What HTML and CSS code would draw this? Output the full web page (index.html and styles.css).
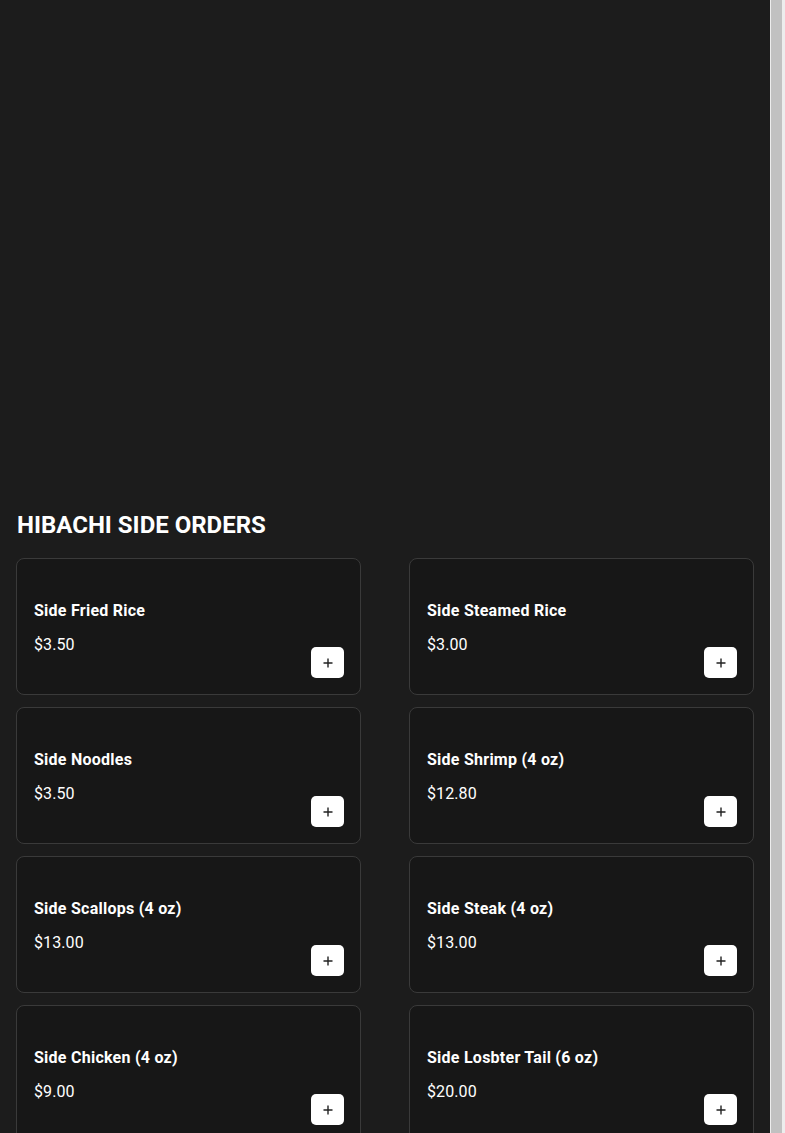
FILE: index.html
```html
<!DOCTYPE html>
<html lang="en">
<head>
<meta charset="utf-8">
<title>Hibachi Side Orders</title>
<link rel="stylesheet" href="styles.css">
</head>
<body>
<div class="frame">
<main class="page">
  <div class="hero"></div>
  <section class="section">
    <h2 class="section-title">HIBACHI SIDE ORDERS</h2>
    <div class="grid">
      <div class="card"><div class="info"><div class="name">Side Fried Rice</div><div class="price">$3.50</div></div><button class="add"><svg viewBox="0 0 12 12" width="12" height="12"><path d="M6 1.5v9M1.5 6h9" stroke="#222" stroke-width="1.4" fill="none"/></svg></button></div>
      <div class="card"><div class="info"><div class="name">Side Steamed Rice</div><div class="price">$3.00</div></div><button class="add"><svg viewBox="0 0 12 12" width="12" height="12"><path d="M6 1.5v9M1.5 6h9" stroke="#222" stroke-width="1.4" fill="none"/></svg></button></div>
      <div class="card"><div class="info"><div class="name">Side Noodles</div><div class="price">$3.50</div></div><button class="add"><svg viewBox="0 0 12 12" width="12" height="12"><path d="M6 1.5v9M1.5 6h9" stroke="#222" stroke-width="1.4" fill="none"/></svg></button></div>
      <div class="card"><div class="info"><div class="name">Side Shrimp (4 oz)</div><div class="price">$12.80</div></div><button class="add"><svg viewBox="0 0 12 12" width="12" height="12"><path d="M6 1.5v9M1.5 6h9" stroke="#222" stroke-width="1.4" fill="none"/></svg></button></div>
      <div class="card"><div class="info"><div class="name">Side Scallops (4 oz)</div><div class="price">$13.00</div></div><button class="add"><svg viewBox="0 0 12 12" width="12" height="12"><path d="M6 1.5v9M1.5 6h9" stroke="#222" stroke-width="1.4" fill="none"/></svg></button></div>
      <div class="card"><div class="info"><div class="name">Side Steak (4 oz)</div><div class="price">$13.00</div></div><button class="add"><svg viewBox="0 0 12 12" width="12" height="12"><path d="M6 1.5v9M1.5 6h9" stroke="#222" stroke-width="1.4" fill="none"/></svg></button></div>
      <div class="card"><div class="info"><div class="name">Side Chicken (4 oz)</div><div class="price">$9.00</div></div><button class="add"><svg viewBox="0 0 12 12" width="12" height="12"><path d="M6 1.5v9M1.5 6h9" stroke="#222" stroke-width="1.4" fill="none"/></svg></button></div>
      <div class="card"><div class="info"><div class="name">Side Losbter Tail (6 oz)</div><div class="price">$20.00</div></div><button class="add"><svg viewBox="0 0 12 12" width="12" height="12"><path d="M6 1.5v9M1.5 6h9" stroke="#222" stroke-width="1.4" fill="none"/></svg></button></div>
    </div>
  </section>
</main>
<div class="scrollbar"><div class="thumb"></div></div>
</div>
</body>
</html>
```
FILE: styles.css
```css
html, body {
  margin: 0;
  padding: 0;
  background: #1c1c1c;
  overflow: hidden;
}
body {
  font-family: Roboto, "Liberation Sans", Arial, sans-serif;
  color: #ffffff;
}
.frame {
  display: flex;
  height: 1133px;
  overflow: hidden;
}
.page {
  flex: 1;
  min-width: 0;
  padding: 0 16px 40px;
}
.scrollbar {
  width: 15px;
  flex: none;
  background: #ededed;
  display: flex;
  padding: 0 3px 0 1px;
  box-sizing: border-box;
}
.thumb {
  flex: 1;
  background: #c1c1c1;
}
.hero {
  height: 509px;
}
.section-title {
  margin: 0 0 17px;
  font-size: 24px;
  line-height: 32px;
  font-weight: 700;
  letter-spacing: 0;
  padding-left: 1px;
}
.grid {
  display: grid;
  grid-template-columns: 1fr 1fr;
  column-gap: 48px;
  row-gap: 12px;
}
.card {
  display: grid;
  grid-template-columns: 1fr auto;
  background: #171717;
  border: 1px solid #3a3a3a;
  border-radius: 8px;
  padding: 39px 16px 16px 17px;
  min-height: 80px;
}
.info {
  align-self: start;
}
.name {
  font-size: 16px;
  line-height: 24px;
  font-weight: 700;
  letter-spacing: 0.25px;
  padding-top: 1px;
}
.price {
  margin-top: 10px;
  font-size: 16px;
  line-height: 24px;
  font-weight: 400;
  letter-spacing: 0.1px;
}
.add {
  align-self: end;
  width: 33px;
  height: 31px;
  padding: 0;
  border: none;
  border-radius: 5px;
  background: #ffffff;
  display: flex;
  align-items: center;
  justify-content: center;
  cursor: pointer;
}
```
